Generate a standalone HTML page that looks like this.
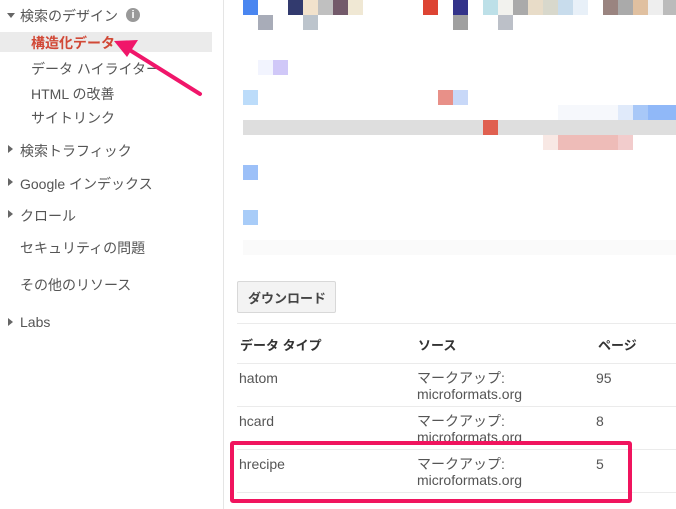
<!DOCTYPE html>
<html><head><meta charset="utf-8"><style>
body{margin:0;width:676px;height:509px;position:relative;overflow:hidden;background:#fff;font-family:"Liberation Sans","Noto Sans CJK JP",sans-serif;font-size:14px;color:#555}
.a{position:absolute;white-space:nowrap}
.b{position:absolute}
.tri{position:absolute;width:0;height:0}
</style></head><body>
<div class="b" style="left:223px;top:0;width:1px;height:509px;background:#e5e5e5"></div>
<div class="b" style="left:0;top:32px;width:212px;height:20px;background:#ebebeb"></div>
<div class="tri" style="left:7px;top:13px;border-left:4px solid transparent;border-right:4px solid transparent;border-top:5px solid #666"></div>
<div class="a" style="left:20px;top:6px;color:#555">検索のデザイン</div>
<div class="b" style="left:126px;top:8px;width:14px;height:14px;border-radius:50%;background:#999;color:#fff;font-size:11px;font-weight:bold;text-align:center;line-height:14px">i</div>
<div class="a" style="left:31px;top:33px;color:#d14836;font-weight:bold">構造化データ</div>
<div class="a" style="left:31px;top:59px">データ ハイライター</div>
<div class="a" style="left:31px;top:84px">HTML の改善</div>
<div class="a" style="left:31px;top:108px">サイトリンク</div>
<div class="tri" style="left:8px;top:145px;border-top:4px solid transparent;border-bottom:4px solid transparent;border-left:5px solid #666"></div>
<div class="a" style="left:20px;top:141px">検索トラフィック</div>
<div class="tri" style="left:8px;top:178px;border-top:4px solid transparent;border-bottom:4px solid transparent;border-left:5px solid #666"></div>
<div class="a" style="left:20px;top:174px">Google インデックス</div>
<div class="tri" style="left:8px;top:210px;border-top:4px solid transparent;border-bottom:4px solid transparent;border-left:5px solid #666"></div>
<div class="a" style="left:20px;top:206px">クロール</div>
<div class="a" style="left:20px;top:238px">セキュリティの問題</div>
<div class="a" style="left:20px;top:275px">その他のリソース</div>
<div class="tri" style="left:8px;top:318px;border-top:4px solid transparent;border-bottom:4px solid transparent;border-left:5px solid #666"></div>
<div class="a" style="left:20px;top:314px">Labs</div>

<!-- pixel blocks -->
<div class="b" style="left:243px;top:0;width:15px;height:15px;background:#4a86f0"></div>
<div class="b" style="left:288px;top:0;width:15px;height:15px;background:#323a6e"></div>
<div class="b" style="left:303px;top:0;width:15px;height:15px;background:#f2e2cc"></div>
<div class="b" style="left:318px;top:0;width:15px;height:15px;background:#c0c0c0"></div>
<div class="b" style="left:333px;top:0;width:15px;height:15px;background:#735a6a"></div>
<div class="b" style="left:348px;top:0;width:15px;height:15px;background:#f0e8d4"></div>
<div class="b" style="left:423px;top:0;width:15px;height:15px;background:#dd4433"></div>
<div class="b" style="left:453px;top:0;width:15px;height:15px;background:#33338a"></div>
<div class="b" style="left:483px;top:0;width:15px;height:15px;background:#bde0e8"></div>
<div class="b" style="left:498px;top:0;width:15px;height:15px;background:#f2f2ee"></div>
<div class="b" style="left:513px;top:0;width:15px;height:15px;background:#aaa"></div>
<div class="b" style="left:528px;top:0;width:15px;height:15px;background:#e8dcc8"></div>
<div class="b" style="left:543px;top:0;width:15px;height:15px;background:#d8d8cc"></div>
<div class="b" style="left:558px;top:0;width:15px;height:15px;background:#c8dcec"></div>
<div class="b" style="left:573px;top:0;width:15px;height:15px;background:#e8f0f8"></div>
<div class="b" style="left:603px;top:0;width:15px;height:15px;background:#9a8480"></div>
<div class="b" style="left:618px;top:0;width:15px;height:15px;background:#aaa"></div>
<div class="b" style="left:633px;top:0;width:15px;height:15px;background:#e0c0a0"></div>
<div class="b" style="left:648px;top:0;width:15px;height:15px;background:#eee"></div>
<div class="b" style="left:663px;top:0;width:13px;height:15px;background:#bbb"></div>
<div class="b" style="left:258px;top:15px;width:15px;height:15px;background:#a8acb8"></div>
<div class="b" style="left:303px;top:15px;width:15px;height:15px;background:#bcc4cc"></div>
<div class="b" style="left:453px;top:15px;width:15px;height:15px;background:#a0a0a0"></div>
<div class="b" style="left:498px;top:15px;width:15px;height:15px;background:#bcc0c8"></div>
<div class="b" style="left:258px;top:60px;width:15px;height:15px;background:#f2f4fe"></div>
<div class="b" style="left:273px;top:60px;width:15px;height:15px;background:#d0c8f8"></div>
<div class="b" style="left:243px;top:90px;width:15px;height:15px;background:#bcdcfa"></div>
<div class="b" style="left:438px;top:90px;width:15px;height:15px;background:#e89088"></div>
<div class="b" style="left:453px;top:90px;width:15px;height:15px;background:#c8d8f8"></div>
<div class="b" style="left:558px;top:105px;width:60px;height:15px;background:#f6f8fc"></div>
<div class="b" style="left:618px;top:105px;width:15px;height:15px;background:#e0eafa"></div>
<div class="b" style="left:633px;top:105px;width:15px;height:15px;background:#a8c8f8"></div>
<div class="b" style="left:648px;top:105px;width:28px;height:15px;background:#90b8f8"></div>
<div class="b" style="left:243px;top:120px;width:433px;height:15px;background:#dedede"></div>
<div class="b" style="left:483px;top:120px;width:15px;height:15px;background:#e06050"></div>
<div class="b" style="left:543px;top:135px;width:15px;height:15px;background:#f8e8e4"></div>
<div class="b" style="left:558px;top:135px;width:60px;height:15px;background:#eebcb8"></div>
<div class="b" style="left:618px;top:135px;width:15px;height:15px;background:#f2cccc"></div>
<div class="b" style="left:243px;top:165px;width:15px;height:15px;background:#9cc0f8"></div>
<div class="b" style="left:243px;top:210px;width:15px;height:15px;background:#a8ccf8"></div>
<div class="b" style="left:243px;top:240px;width:433px;height:15px;background:#fafafa"></div>

<!-- button -->
<div class="b" style="left:237px;top:281px;width:97px;height:30px;background:#f3f3f3;border:1px solid #d8d8d8;border-radius:2px"></div>
<div class="a" style="left:248px;top:288px;color:#444;font-weight:bold;font-size:13px">ダウンロード</div>
<!-- table -->
<div class="b" style="left:237px;top:323px;width:439px;height:1px;background:#ebebeb"></div>
<div class="a" style="left:240px;top:335px;color:#333;font-weight:bold;font-size:13px">データ タイプ</div>
<div class="a" style="left:418px;top:335px;color:#333;font-weight:bold;font-size:13px">ソース</div>
<div class="a" style="left:598px;top:335px;color:#333;font-weight:bold;font-size:13px">ページ</div>
<div class="b" style="left:237px;top:363px;width:439px;height:1px;background:#ebebeb"></div>
<div class="a" style="left:239px;top:370px">hatom</div>
<div class="a" style="left:417px;top:370px;line-height:16px">マークアップ:<br>microformats.org</div>
<div class="a" style="left:596px;top:370px">95</div>
<div class="b" style="left:237px;top:406px;width:439px;height:1px;background:#ebebeb"></div>
<div class="a" style="left:239px;top:413px">hcard</div>
<div class="a" style="left:417px;top:413px;line-height:16px">マークアップ:<br>microformats.org</div>
<div class="a" style="left:596px;top:413px">8</div>
<div class="b" style="left:237px;top:449px;width:439px;height:1px;background:#ebebeb"></div>
<div class="a" style="left:239px;top:456px">hrecipe</div>
<div class="a" style="left:417px;top:456px;line-height:16px">マークアップ:<br>microformats.org</div>
<div class="a" style="left:596px;top:456px">5</div>
<div class="b" style="left:237px;top:492px;width:439px;height:1px;background:#ebebeb"></div>
<div class="b" style="left:230px;top:441px;width:394px;height:54px;border:4px solid #f0145e;border-radius:3px"></div>

<svg class="b" style="left:0;top:0" width="230" height="110">
<line x1="200" y1="94" x2="128" y2="49" stroke="#f0166a" stroke-width="4" stroke-linecap="round"/>
<polygon points="114,41 138,40 127,57" fill="#f0166a"/>
</svg>
</body></html>
